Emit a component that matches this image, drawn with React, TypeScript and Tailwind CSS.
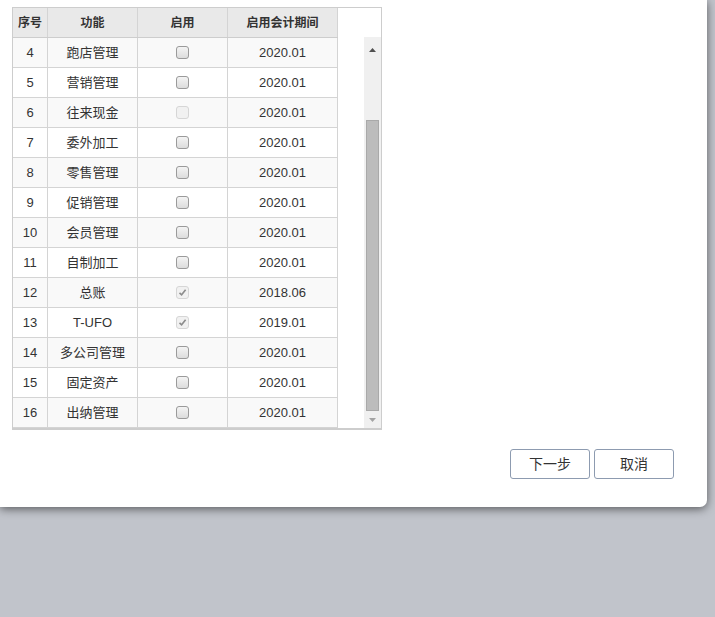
import React from 'react';

type Row = {
  no: number;
  name: string;
  checked?: boolean;
  disabled?: boolean;
  period: string;
};

const rows: Row[] = [
  { no: 4, name: '跑店管理', period: '2020.01' },
  { no: 5, name: '营销管理', period: '2020.01' },
  { no: 6, name: '往来现金', disabled: true, period: '2020.01' },
  { no: 7, name: '委外加工', period: '2020.01' },
  { no: 8, name: '零售管理', period: '2020.01' },
  { no: 9, name: '促销管理', period: '2020.01' },
  { no: 10, name: '会员管理', period: '2020.01' },
  { no: 11, name: '自制加工', period: '2020.01' },
  { no: 12, name: '总账', checked: true, disabled: true, period: '2018.06' },
  { no: 13, name: 'T-UFO', checked: true, disabled: true, period: '2019.01' },
  { no: 14, name: '多公司管理', period: '2020.01' },
  { no: 15, name: '固定资产', period: '2020.01' },
  { no: 16, name: '出纳管理', period: '2020.01' },
];

function Caixa({ checked, disabled }: { checked?: boolean; disabled?: boolean }) {
  return (
    <span
      className={
        'flex h-[13px] w-[13px] items-center justify-center rounded-[3px] border ' +
        (disabled
          ? 'border-[#d6d6d6] bg-[#f1f1f1]'
          : 'border-[#9a9a9a] bg-gradient-to-b from-[#f4f4f4] to-[#dcdcdc]')
      }
    >
      {checked && (
        <svg width="9" height="9" viewBox="0 0 9 9">
          <path d="M1.5 4.8 L3.6 6.8 L7.6 1.8" fill="none" stroke="#8c8c8c" strokeWidth="1.6" />
        </svg>
      )}
    </span>
  );
}

export default function App() {
  return (
    <div
      className="relative h-[617px] w-[715px] overflow-hidden bg-[#c1c4cb] text-[#333]"
      style={{ fontFamily: '"Liberation Sans", Arial, "Noto Sans CJK SC", sans-serif' }}
    >
      <div className="flex h-[507px] w-[707px] flex-col rounded-br-[7px] bg-white shadow-[0_2px_10px_rgba(0,0,0,0.55)]">
        <div className="ml-[12px] mt-[7px] flex w-[370px] border border-b-2 border-[#cdcdcd]">
          {/* tabela */}
          <div className="w-[325px]">
            <div className="flex h-[30px] border-b border-[#cdcdcd] bg-[#e9e9e9] text-[12px] font-bold">
              <div className="flex w-[35px] items-center justify-center border-r border-[#d4d4d4]">序号</div>
              <div className="flex w-[90px] items-center justify-center border-r border-[#d4d4d4]">功能</div>
              <div className="flex w-[90px] items-center justify-center border-r border-[#d4d4d4]">启用</div>
              <div className="flex w-[110px] items-center justify-center border-r border-[#d4d4d4]">启用会计期间</div>
            </div>
            {rows.map((r, i) => (
              <div
                key={r.no}
                className={
                  'flex h-[30px] border-b border-[#d4d4d4] text-[13px] ' + (i % 2 === 0 ? 'bg-[#f9f9f9]' : 'bg-white')
                }
              >
                <div className="flex w-[35px] items-center justify-center border-r border-[#d4d4d4]">{r.no}</div>
                <div className="flex w-[90px] items-center justify-center border-r border-[#d4d4d4]">{r.name}</div>
                <div className="flex w-[90px] items-center justify-center border-r border-[#d4d4d4]">
                  <Caixa checked={r.checked} disabled={r.disabled} />
                </div>
                <div className="flex w-[110px] items-center justify-center border-r border-[#d4d4d4]">{r.period}</div>
              </div>
            ))}
          </div>

          {/* barra de rolagem */}
          <div className="flex flex-1 flex-col">
            <div className="h-[29px]" />
            <div className="flex flex-1 justify-end">
              <div className="flex w-[17px] flex-col bg-[#f0f0f0]">
                <div className="flex h-[17px] items-end justify-center pb-[2px]">
                  <svg width="7" height="4" viewBox="0 0 7 4">
                    <path d="M0 4 L3.5 0 L7 4 Z" fill="#505050" />
                  </svg>
                </div>
                <div className="h-[66px]" />
                <div className="mx-[2px] h-[291px] border border-[#a9a9a9] bg-[#bcbcbc]" />
                <div className="flex flex-1 items-center justify-center">
                  <svg width="7" height="4" viewBox="0 0 7 4">
                    <path d="M0 0 L7 0 L3.5 4 Z" fill="#a3a3a3" />
                  </svg>
                </div>
              </div>
            </div>
          </div>
        </div>

        <div className="mr-[33px] mt-[19px] flex justify-end gap-[4px]">
          <button
            type="button"
            className="h-[30px] w-[80px] rounded-[3px] border border-[#8d9bb0] bg-white text-[14px] text-[#333]"
          >
            下一步
          </button>
          <button
            type="button"
            className="h-[30px] w-[80px] rounded-[3px] border border-[#8d9bb0] bg-white text-[14px] text-[#333]"
          >
            取消
          </button>
        </div>
      </div>
    </div>
  );
}
